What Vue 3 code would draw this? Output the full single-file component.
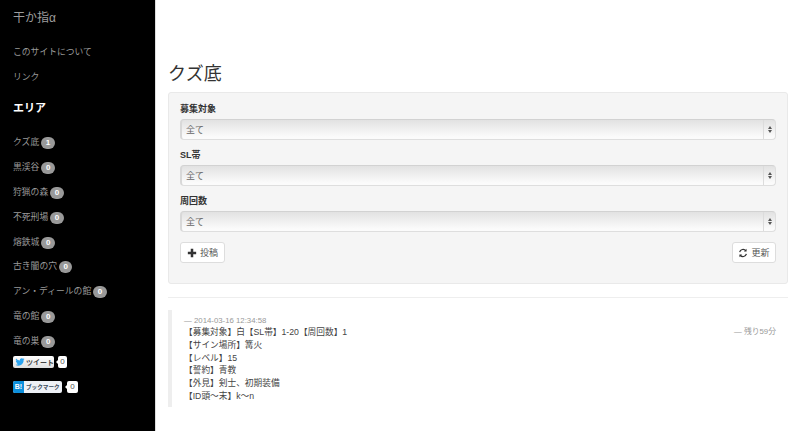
<template>
  <div class="page">
    <aside class="sidebar">
      <div class="brand">干か指α</div>
      <ul class="site-nav">
        <li v-for="link in siteLinks" :key="link">{{ link }}</li>
      </ul>
      <h4 class="area-title">エリア</h4>
      <ul class="area-nav">
        <li v-for="area in areas" :key="area.name">
          {{ area.name }}<span class="badge">{{ area.count }}</span>
        </li>
      </ul>
      <div class="share">
        <span class="share-btn">
          <svg class="bird" viewBox="0 0 24 24"><path d="M23 5a9 9 0 0 1-2.6.7A4.500 4.500 0 0 0 22.400 3.200a9 9 0 0 1-2.900 1.100 4.500 4.500 0 0 0-7.700 4.100A12.800 12.800 0 0 1 2.500 3.700a4.500 4.500 0 0 0 1.400 6 4.500 4.500 0 0 1-2-.6c0 2.200 1.500 4.100 3.600 4.500a4.500 4.500 0 0 1-2 .1 4.500 4.500 0 0 0 4.200 3.100A9 9 0 0 1 1 18.700 12.800 12.800 0 0 0 20.700 7.300 9 9 0 0 0 23 5z"/></svg>
          ツイート
        </span>
        <span class="share-count">0</span>
      </div>
      <div class="share hatena">
        <span class="share-btn"><b class="hb">B!</b><span class="hb-text">ブックマーク</span></span>
        <span class="share-count">0</span>
      </div>
    </aside>

    <main class="content">
      <h2 class="title">クズ底</h2>
      <form class="well" @submit.prevent>
        <div v-for="field in fields" :key="field" class="field">
          <label>{{ field }}</label>
          <div class="select-wrap">
            <select>
              <option>全て</option>
            </select>
            <span class="stepper"><i class="up"></i><i class="down"></i></span>
          </div>
        </div>
        <div class="actions">
          <button type="button" class="btn">
            <svg class="icon" viewBox="0 0 12 12"><path d="M4.500 1h3v3.500H11v3H7.500V11h-3V7.500H1v-3h3.500z" fill="#333"/></svg>
            投稿
          </button>
          <button type="button" class="btn refresh">
            <svg class="icon" viewBox="0 0 12 12" fill="none" stroke="#333" stroke-width="1.500"><path d="M2 5a4.200 4.200 0 0 1 7.400-1.700"/><path d="M10 7a4.200 4.200 0 0 1-7.400 1.700"/><path d="M10.300 1v3.200H7.100z" fill="#333" stroke="none"/><path d="M1.700 11V7.800h3.200z" fill="#333" stroke="none"/></svg>
            更新
          </button>
        </div>
      </form>
      <hr class="rule" />
      <blockquote class="post">
        <div class="post-body">
          <small class="date">— 2014-03-16 12:34:58</small>
          <p v-for="line in lines" :key="line">{{ line }}</p>
        </div>
        <small class="remain">— 残り59分</small>
      </blockquote>
    </main>
  </div>
</template>

<script setup>
const siteLinks = ['このサイトについて', 'リンク']
const areas = [
  { name: 'クズ底', count: 1 },
  { name: '黒渓谷', count: 0 },
  { name: '狩猟の森', count: 0 },
  { name: '不死刑場', count: 0 },
  { name: '熔鉄城', count: 0 },
  { name: '古き闇の穴', count: 0 },
  { name: 'アン・ディールの館', count: 0 },
  { name: '竜の館', count: 0 },
  { name: '竜の巣', count: 0 },
]
const fields = ['募集対象', 'SL帯', '周回数']
const lines = [
  '【募集対象】白【SL帯】1-20【周回数】1',
  '【サイン場所】篝火',
  '【レベル】15',
  '【誓約】青教',
  '【外見】剣士、初期装備',
  '【ID頭〜末】k〜n',
]
</script>

<style>
html, body {
  margin: 0;
  background: #fff;
}
</style>

<style scoped>
.page {
  display: flex;
  height: 431px;
  overflow: hidden;
  font-family: "Liberation Sans", "Noto Sans CJK JP", sans-serif;
  color: #333;
}
.sidebar {
  width: 156px;
  flex-shrink: 0;
  box-sizing: border-box;
  padding: 10px 0 0 13px;
  background: #000;
  border-right: 1px solid #ddd;
  color: #999;
  font-size: 8.800px;
}
.brand {
  font-size: 12px;
  line-height: 16px;
  color: #9d9d9d;
}
ul {
  list-style: none;
  margin: 0;
  padding: 0;
}
.site-nav {
  margin-top: 14px;
}
.site-nav li,
.area-nav li {
  height: 25px;
  line-height: 25px;
  white-space: nowrap;
}
.area-title {
  margin: 7px 0 0;
  font-size: 11px;
  line-height: 22px;
  font-weight: bold;
  color: #fff;
}
.area-nav {
  margin-top: 11px;
}
.area-nav li {
  height: 24.900px;
}
.badge {
  display: inline-block;
  margin-left: 2px;
  padding: 0 4.500px;
  height: 12px;
  line-height: 12px;
  border-radius: 6px;
  background: #999;
  color: #fff;
  font-size: 8px;
  font-weight: bold;
}
.share {
  display: flex;
  align-items: center;
  height: 12px;
  margin-top: 2px;
  font-size: 7px;
}
.share.hatena {
  margin-top: 13px;
}
.share-btn {
  display: flex;
  align-items: center;
  gap: 1px;
  height: 12px;
  box-sizing: border-box;
  padding: 0 2px;
  width: 41px;
  background: linear-gradient(#fff, #dedede);
  border-radius: 2px;
  color: #444;
  font-weight: bold;
  white-space: nowrap;
}
.bird {
  width: 10px;
  height: 10px;
  fill: #2aa3ef;
  flex-shrink: 0;
}
.share-count {
  position: relative;
  margin-left: 4px;
  height: 12px;
  line-height: 12px;
  padding: 0 2px;
  min-width: 5px;
  background: #fff;
  border-radius: 2px;
  color: #555;
  font-size: 8px;
  text-align: center;
}
.share-count::before {
  content: "";
  position: absolute;
  left: -2px;
  top: 4px;
  border-top: 2px solid transparent;
  border-bottom: 2px solid transparent;
  border-right: 2px solid #fff;
}
.hatena .share-btn {
  width: 49px;
  padding: 0;
  background: #eef1f6;
}
.hb {
  width: 11px;
  height: 12px;
  line-height: 12px;
  background: #0d8fdc;
  color: #fff;
  text-align: center;
  border-radius: 2px 0 0 2px;
}
.hb-text {
  margin-left: 1px;
  font-size: 5.600px;
  color: #3b4a5a;
}
.hatena .share-count {
  margin-left: 5px;
  padding: 0 3px;
}
.content {
  flex: 1;
  min-width: 0;
  padding: 62px 12px 0 12px;
}
.title {
  margin: 0 0 6px;
  font-size: 18px;
  line-height: 24px;
  font-weight: 400;
  color: #333;
}
.well {
  box-sizing: border-box;
  height: 192px;
  padding: 10px 11px;
  background: #f5f5f5;
  border: 1px solid #e9e9e9;
  border-radius: 3px;
}
.field {
  margin-bottom: 9px;
}
.field label {
  display: block;
  height: 16px;
  line-height: 13px;
  font-size: 9px;
  font-weight: bold;
  color: #333;
}
.select-wrap {
  position: relative;
  height: 21px;
}
select {
  display: block;
  width: 100%;
  height: 21px;
  box-sizing: border-box;
  margin: 0;
  padding: 0 0 0 4px;
  appearance: none;
  border: 1px solid #dedede;
  border-left: 2px solid #d8d8d8;
  border-top: 1px solid #d2d2d2;
  border-radius: 4px;
  background: linear-gradient(#e2e2e2, #fbfbfb 90%);
  color: #666;
  font-family: inherit;
  font-size: 9px;
}
.stepper {
  position: absolute;
  top: 1px;
  right: 1px;
  bottom: 1px;
  width: 11px;
  display: flex;
  flex-direction: column;
  align-items: center;
  justify-content: center;
  gap: 1px;
  border-left: 1px solid #dcdcdc;
  pointer-events: none;
}
.stepper i {
  width: 0;
  height: 0;
  border-left: 2px solid transparent;
  border-right: 2px solid transparent;
}
.stepper .up {
  border-bottom: 3px solid #555;
}
.stepper .down {
  border-top: 3px solid #555;
}
.actions {
  display: flex;
  justify-content: space-between;
  margin-top: 10px;
}
.btn {
  display: inline-flex;
  align-items: center;
  justify-content: center;
  gap: 3px;
  height: 21px;
  width: 45px;
  padding: 0;
  background: #fff;
  border: 1px solid #ddd;
  border-radius: 3px;
  color: #555;
  font-family: inherit;
  font-size: 9px;
}
.refresh {
  width: 44px;
}
.icon {
  width: 10px;
  height: 10px;
}
.rule {
  height: 1px;
  margin: 13px 0 12px;
  border: 0;
  background: #eee;
}
.post {
  display: flex;
  justify-content: space-between;
  height: 97px;
  margin: 0;
  box-sizing: border-box;
  padding: 6px 12px 0 12px;
  border-left: 4px solid #eee;
}
.date {
  display: block;
  font-size: 7.800px;
  line-height: 10px;
  color: #999;
}
.post p {
  margin: 0;
  font-size: 8.700px;
  line-height: 12.800px;
  color: #444;
  white-space: nowrap;
}
.remain {
  margin-top: 10px;
  font-size: 7.800px;
  line-height: 11px;
  color: #999;
}
</style>
